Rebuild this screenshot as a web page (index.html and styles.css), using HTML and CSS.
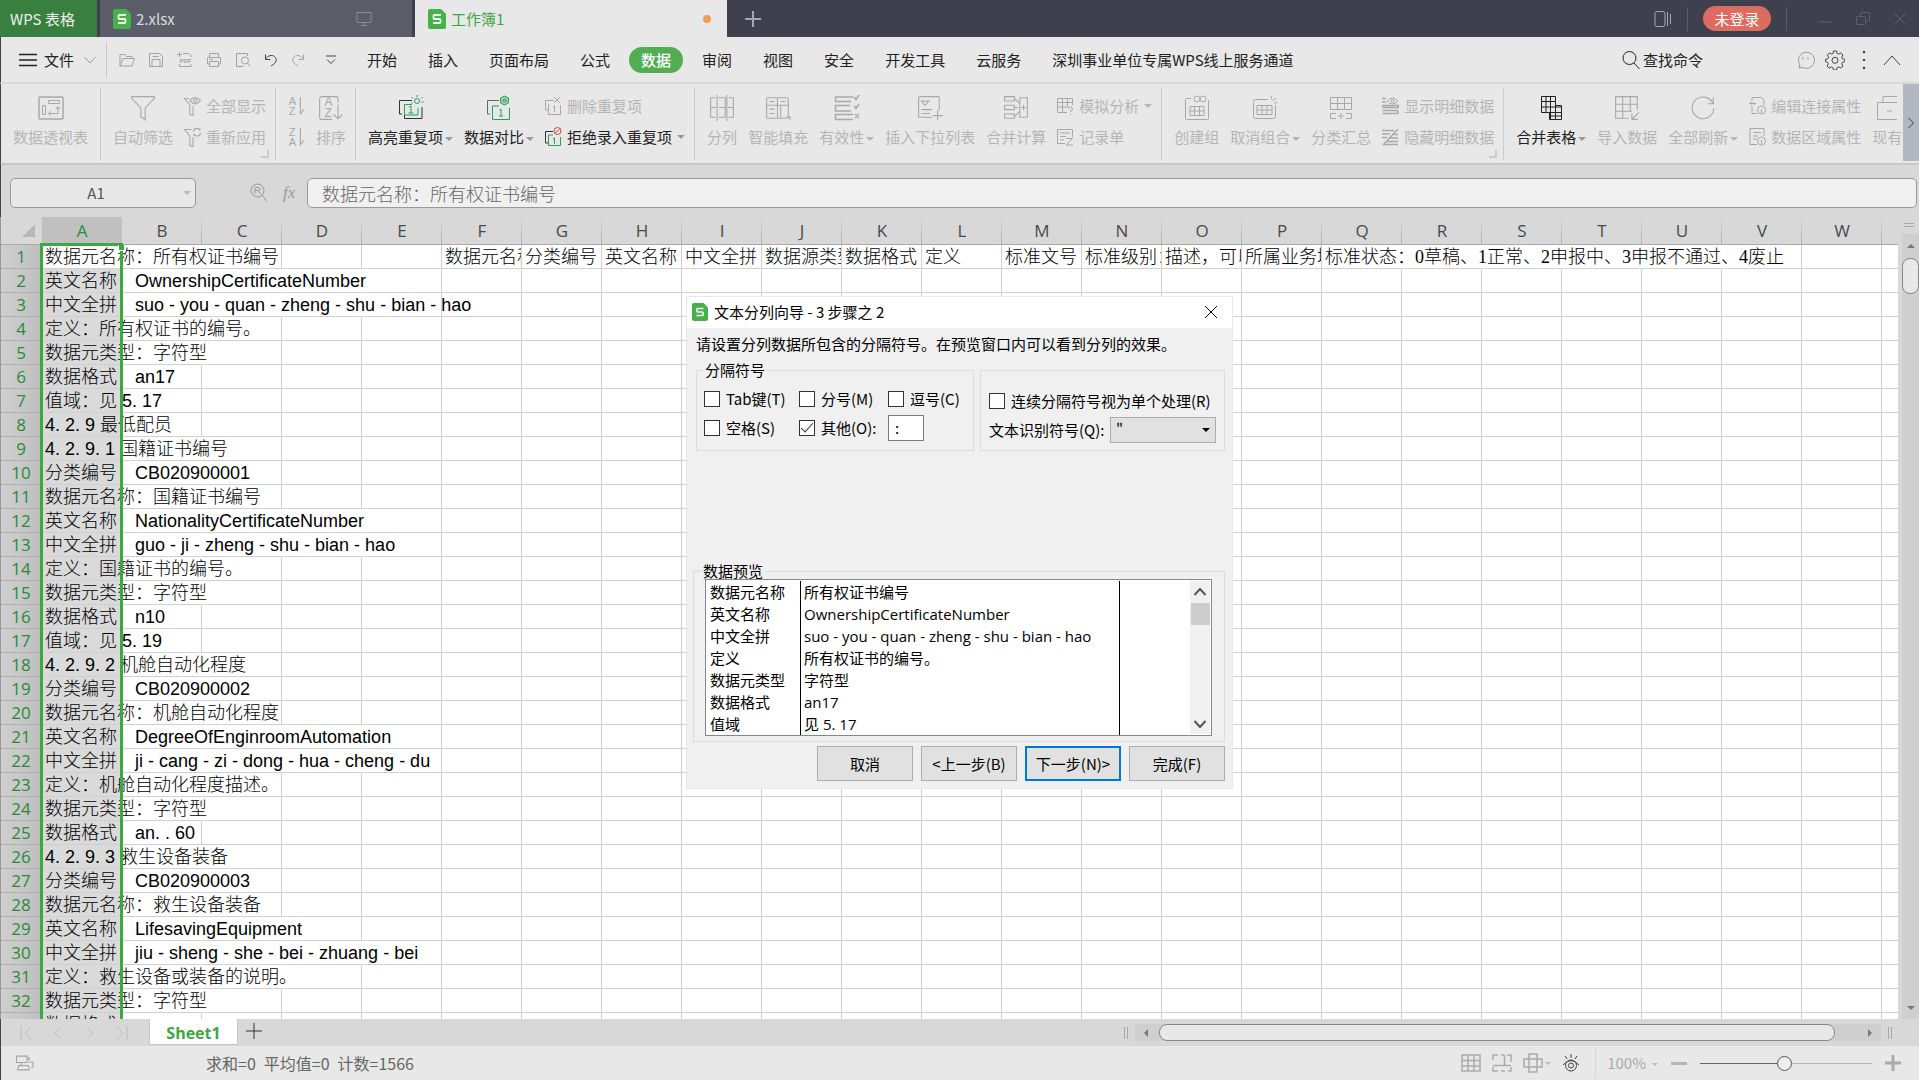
FILE: index.html
```html
<!DOCTYPE html>
<html lang="zh-CN">
<head>
<meta charset="utf-8">
<title>工作簿1 - WPS 表格</title>
<link rel="stylesheet" href="styles.css">
</head>
<body>
<svg class="sprite" aria-hidden="true">
  <symbol id="logo" viewBox="0 0 18 20"><path d="M2 0h11l5 5v13a2 2 0 0 1-2 2H2a2 2 0 0 1-2-2V2a2 2 0 0 1 2-2z" fill="#46b04a" stroke="none"/><path d="M13 6H6.500a1 1 0 0 0-1 1v2a1 1 0 0 0 1 1h5a1 1 0 0 1 1 1v2a1 1 0 0 1-1 1H5" stroke="#f2f2f2" stroke-width="1.800"/></symbol>
  <symbol id="monitor" viewBox="0 0 16 16"><path d="M1 1.500h14v10H1zM8 11.500v3M4.500 14.500h7"/></symbol>
  <symbol id="plus" viewBox="0 0 16 16"><path d="M8 0v16M0 8h16"/></symbol>
  <symbol id="panes" viewBox="0 0 18 18"><rect x="1" y="1.500" width="10" height="15" rx="2"/><path d="M13.500 2v14M16.500 4v10"/></symbol>
  <symbol id="min" viewBox="0 0 16 16"><path d="M2 11h12"/></symbol>
  <symbol id="restore" viewBox="0 0 16 16"><rect x="1.500" y="5.500" width="9" height="8" rx="1"/><path d="M5.500 5V2.500a1 1 0 0 1 1-1h7a1 1 0 0 1 1 1V9a1 1 0 0 1-1 1H11"/></symbol>
  <symbol id="cross" viewBox="0 0 14 14"><path d="M1 1l12 12M13 1L1 13"/></symbol>
  <symbol id="burger" viewBox="0 0 18 14"><path d="M0 1.500h18M0 7h18M0 12.500h18"/></symbol>
  <symbol id="chev" viewBox="0 0 12 8"><path d="M.5 1l5.500 6L11.500 1"/></symbol>
  <symbol id="open" viewBox="0 0 16 14"><path d="M1 13V1.500h5l1.500 2H13v2M1 13l3-7.500h11.500L13 13z"/></symbol>
  <symbol id="save" viewBox="0 0 16 16"><path d="M1.500 1.500h10l3 3v10h-13zM4 14V7.500h8V14M4.500 4.500h6"/></symbol>
  <symbol id="pdf" viewBox="0 0 16 16"><path d="M2.500 5V3M6 1.500h5.500l2.500 2V5M2.500 12v2.500H14V12M0 2.500h5M2.500 0v5"/><text x="8.500" y="11" text-anchor="middle" font-family="Liberation Sans, sans-serif" font-weight="700" font-size="6" fill="currentColor" stroke="none">PDF</text></symbol>
  <symbol id="print" viewBox="0 0 16 16"><path d="M3.500 5V1.500h9V5M3.500 12H1.500V5.500h13V12h-2M3.500 9.500h9v5h-9zM4 7.500h3"/></symbol>
  <symbol id="preview" viewBox="0 0 16 16"><path d="M12.500 4V1.500h-11v13h7"/><circle cx="10" cy="8.500" r="3.500"/><path d="M12.500 11l3 3.500"/></symbol>
  <symbol id="undo" viewBox="0 0 14 14"><path d="M1.500 1.500v5h5M1.500 6C4 2.500 8 1.500 10.500 3.500s3 6-3.500 9.500"/></symbol>
  <symbol id="redo" viewBox="0 0 14 14"><path d="M12.500 1.500v5h-5M12.500 6C10 2.500 6 1.500 3.500 3.500s-3 6 3.500 9.500"/></symbol>
  <symbol id="more" viewBox="0 0 10 10"><path d="M0 1h10M1 4.500l4 4 4-4"/></symbol>
  <symbol id="search" viewBox="0 0 20 20"><circle cx="8.500" cy="8" r="6.500"/><path d="M13 13l5.500 6"/></symbol>
  <symbol id="smile" viewBox="0 0 18 18"><path d="M2 17l1-3a8 8 0 1 1 3 2.500zM6 6v2.500M11 6v2.500"/></symbol>
  <symbol id="gear" viewBox="0 0 20 20"><path d="M8.500 1h3l.6 2.400 1.500.7 2.300-1.200 2 2-1.200 2.300.7 1.500 2.400.6v2.400l-2.400.6-.7 1.500 1.200 2.300-2 2-2.300-1.200-1.500.7-.6 2.400h-3l-.6-2.400-1.500-.7-2.300 1.200-2-2 1.200-2.300-.7-1.500L.5 11.700V9.300l2.400-.6.7-1.500-1.200-2.300 2-2 2.300 1.200 1.500-.7z"/><circle cx="10" cy="10.300" r="3"/></symbol>
  <symbol id="dots" viewBox="0 0 4 18"><path d="M1 2h2M1 9h2M1 16h2" stroke-width="2"/></symbol>
  <symbol id="up" viewBox="0 0 18 12"><path d="M1 11L9 2l8 9"/></symbol>
  <symbol id="pivot" viewBox="0 0 26 24"><rect x="1" y="1" width="24" height="22" rx="1" stroke-width="1.500"/><path d="M10.500 4.500h11v3h-11zM4.500 9.500h3v9h-3zM11 17.500h9v-7M18 13l2-2.500 2 2.500M13 15l-2.500 2.500L13 20"/></symbol>
  <symbol id="filter" viewBox="0 0 24 24"><path d="M1.500 1.500h21v1.500l-8.500 9V23l-4-3v-8L1.500 3z"/></symbol>
  <symbol id="filter-eye" viewBox="0 0 16 18"><path d="M5 2H.5l5 6v9l3 1V9"/><path d="M5.500 4q5-6 10 0q-5 6-10 0z"/><circle cx="10.500" cy="4" r="1.500"/></symbol>
  <symbol id="filter-re" viewBox="0 0 16 18"><path d="M7 2H.5l5 6v9l3 1V9"/><path d="M9 4c0-4 5-4 6-1V1M15.500 5c0 4-5 4-6 1v2"/></symbol>
  <symbol id="az" viewBox="0 0 14 18"><text x="0" y="8" font-family="Liberation Sans, sans-serif" font-size="10" fill="currentColor" stroke="none">A</text><text x="0" y="17" font-family="Liberation Sans, sans-serif" font-size="10" fill="currentColor" stroke="none">Z</text><path d="M10.500 1v15l3-4"/></symbol>
  <symbol id="za" viewBox="0 0 14 18"><text x="0" y="8" font-family="Liberation Sans, sans-serif" font-size="10" fill="currentColor" stroke="none">Z</text><text x="0" y="17" font-family="Liberation Sans, sans-serif" font-size="10" fill="currentColor" stroke="none">A</text><path d="M10.500 1v15l3-4"/></symbol>
  <symbol id="sort" viewBox="0 0 24 24"><path d="M13 22.500H3.500a2 2 0 0 1-2-2v-17a2 2 0 0 1 2-2h13a2 2 0 0 1 2 2V7M18.500 9v13M14.500 18l4 4 4-4"/><text x="6" y="10" font-family="Liberation Sans, sans-serif" font-size="11" fill="currentColor" stroke="none">A</text><text x="6" y="20" font-family="Liberation Sans, sans-serif" font-size="11" fill="currentColor" stroke="none">Z</text></symbol>
  <symbol id="hilite" viewBox="0 0 26 26"><path d="M4 19H1.500V5.500H14M24 12v11.500H6.500V20" stroke="#333"/><g stroke="#2f9e5c"><path d="M14 9.500H6.500V20H20v-7M11 12l2-1v7M10.500 18h5"/><circle cx="19" cy="6" r="2.500"/><path d="M19 0v2M13.500 2l1.500 1.500M24.500 2L23 3.500M25.500 7h-2M13 8h1.500"/></g></symbol>
  <symbol id="compare" viewBox="0 0 26 26"><path d="M4 19H1.500V5.500H13" stroke="#666"/><g stroke="#2f9e5c"><path d="M13 11H6.500v13.500h17V13M13.500 15l1.500-1v7M13 21h4"/><path d="M18.500 1l4 2v5l-4 2-4-2V3z" fill="#a5cdb4"/><circle cx="18.500" cy="5.500" r="1.500"/></g></symbol>
  <symbol id="dup" viewBox="0 0 17 20"><path d="M3 14H.5V4.500H9M4 8H3.500v10.500h12V9M8 11l1.500-1v6M9 1l6 6M15 1L9 7"/></symbol>
  <symbol id="reject" viewBox="0 0 17 20"><path d="M3 16H.5V4.500H8" stroke="#333"/><path d="M8 8H3.500v10.500h12V10M8 12l1.500-1v6" stroke="#2f9e5c"/><g stroke="#d9433d"><circle cx="12.500" cy="4" r="3.500"/><path d="M10 6.500l5-5"/></g></symbol>
  <symbol id="split" viewBox="0 0 24 24"><path d="M6 2.500H1.500v18H6M18 2.500h4.500v18H18M9 2.500h6v18H9M1.500 11.500h5M9 11.500h6M17.500 11.500h5M7.500 0v24M16.500 0v24"/></symbol>
  <symbol id="smart" viewBox="0 0 24 24"><rect x="1.500" y="2.500" width="20" height="19" rx="1"/><path d="M11.500 3v18M1.500 9.500h20M4 6h5M14 6h5M4 13h5M4 17h5M14.500 10v11M20 20h3v3"/></symbol>
  <symbol id="valid" viewBox="0 0 26 26"><path d="M19 2H1.500v4.500H17M16 10.500H1.500V16H17M19 19.500H1.500v5H19M20 2l2 2.500L25 0M20 11l2 2.500L25 9M21 19l4 4M25 19l-4 4" stroke-width="1.500"/></symbol>
  <symbol id="drop" viewBox="0 0 24 24"><path d="M20.500 14V2.500a1 1 0 0 0-1-1h-17a1 1 0 0 0-1 1v18h12M4 5.500h7l-3.500 4zM4 13.500h10M4 17h8M19 14v9.500M14.500 19H24"/></symbol>
  <symbol id="consol" viewBox="0 0 24 24"><path d="M1.500 1.500h9v4h-9zM1.500 9.500h9v4h-9zM1.500 17.500h9v4h-9zM15.500 2.500h7v18h-7zM17 11.500h4M19 9v5M11 3.500l4 4M11 11.500h3M11 19.500l4-4"/></symbol>
  <symbol id="whatif" viewBox="0 0 17 18"><path d="M10 15.500H.5v-14h15V8M.5 5.500h15M.5 10h10M5.500 1.500v14M10.500 1.500V10M11.500 12q0-2 2-2t2 2q0 1-2 2v1M13.500 17v1"/></symbol>
  <symbol id="form" viewBox="0 0 17 18"><path d="M15.500 9V1.500H.5v14H8M3 5h10M3 8.500h6M3 12h4M9 10.500h6.500L9 17h7"/></symbol>
  <symbol id="group" viewBox="0 0 26 26"><path d="M7 3.500H2.500a1 1 0 0 0-1 1v19a1 1 0 0 0 1 1h21a1 1 0 0 0 1-1V5M6 11.500h14v9H6zM6 16h14M10.500 11.500v9M15.500 11.500v9"/><circle cx="13" cy="4" r="3"/><circle cx="19" cy="4" r="3"/></symbol>
  <symbol id="ungroup" viewBox="0 0 26 26"><path d="M16 4.500H3.500a2 2 0 0 0-2 2v15a2 2 0 0 0 2 2h18a2 2 0 0 0 2-2V10M5 10.500h15v9H5zM5 15h15M10 10.500v9M15 10.500v9M19 1l1 4M24 3l-3 3M25.500 7.500L22 8"/></symbol>
  <symbol id="subtotal" viewBox="0 0 26 26"><path d="M2.500 2.500h21v12h-21zM2.500 8.500h21M9.500 2.500v12M16.500 2.500v12M8 18.500H2.500v5H8M18 18.500h5.500v5H18M10 21h6M13 18v6"/></symbol>
  <symbol id="show" viewBox="0 0 17 18"><path d="M0 1.500h4M0 5h4M0 8.500h16.500v2H0M.5 13.500H16M.5 16.500H16V14" stroke-width="1.500"/><path d="M5 4q5.500-6 11 0q-5.500 6-11 0z"/><circle cx="10.500" cy="4" r="1.500"/></symbol>
  <symbol id="hide" viewBox="0 0 17 18"><path d="M0 2.500h12M0 6h8M0 9.500h5M16 6.500h-5M16 10H8M16 13.500H4M16 16.500H2M16 1L1 17" stroke-width="1.300"/></symbol>
  <symbol id="merge" viewBox="0 0 24 26"><path d="M2.500 1.500h14v9h6v14h-12v-7h-8zM2.500 6.500h14M2.500 12h20M7 1.500v16M11.500 1.500v23M16.500 10v14.500M2.500 17.500h20M10 21h12.500"/></symbol>
  <symbol id="import" viewBox="0 0 24 24"><path d="M21.500 14V1.500h-20v20h12M1.500 8.500h20M1.500 15h15M8 1.500v20M15 1.500v13M23 16l-6.500 6.500M16.500 17v5.500H22"/></symbol>
  <symbol id="refresh" viewBox="0 0 24 24"><path d="M21 7.500A10 10 0 1 0 22 12M21.500 2v6H16"/></symbol>
  <symbol id="conn" viewBox="0 0 17 20"><path d="M3 5V1.500h9.500L15 4v5M3 10v7.500h5M0 7.500h7M5 6v3M2 6v3"/><circle cx="12.500" cy="14" r="4"/><path d="M12.500 13v4"/></symbol>
  <symbol id="area" viewBox="0 0 17 20"><path d="M15 9V1.500H1v16h7M4 5.500h8M4 9h5M4 12h4"/><circle cx="12.500" cy="14" r="4"/><path d="M12.500 13v4"/></symbol>
  <symbol id="exist" viewBox="0 0 24 26"><path d="M8 8V1.500h14M22 7.500H2.500v17H22M12 16h5"/></symbol>
  <symbol id="zoomr" viewBox="0 0 18 20"><circle cx="7.500" cy="7.500" r="6.500"/><path d="M5 11V4.500h3.500a1.500 1.500 0 0 1 0 3H5M8 7.500l2.500 3.500M12 12l5 6.500"/></symbol>
  <symbol id="first" viewBox="0 0 12 14"><path d="M1 0v14M11 1L5 7l6 6"/></symbol>
  <symbol id="prev" viewBox="0 0 12 14"><path d="M9 1L3 7l6 6"/></symbol>
  <symbol id="next" viewBox="0 0 12 14"><path d="M3 1l6 6-6 6"/></symbol>
  <symbol id="last" viewBox="0 0 12 14"><path d="M11 0v14M1 1l6 6-6 6"/></symbol>
  <symbol id="backup" viewBox="0 0 17 16"><path d="M.5 1.500h10v6H.5zM10.500 3h2v2h-2M5 7.500v3M12 7h4v5h-2M2.500 10.500h9l1 4h-11z"/></symbol>
  <symbol id="gridv" viewBox="0 0 20 18"><path d="M1 1h18v16H1zM1 6.500h18M1 12h18M7 1v16M13 1v16" stroke-width="1.500"/></symbol>
  <symbol id="pagev" viewBox="0 0 20 18"><path d="M1 6V1h5M9 1h3M12.500 1v10.500M1 11.500h18M15 1h4v7M1 13v4h5M9 17h4M16 17h3v-4" stroke-width="1.500"/></symbol>
  <symbol id="readv" viewBox="0 0 20 20"><path d="M6 1h8v18H6zM1 6h18v8H1zM6 6v8M14 6v8" stroke-width="1.500"/></symbol>
  <symbol id="eye" viewBox="0 0 18 18"><circle cx="9" cy="11.500" r="5.500"/><circle cx="9" cy="11.500" r="2.500"/><path d="M1 11q8-9 16 0M9 0v4M3 2l2 3M15 2l-2 3"/></symbol>
</svg>

<header class="titlebar">
  <button class="brand">WPS 表格</button>
  <a class="doc" href="#"><svg class="i18"><use href="#logo"/></svg><span>2.xlsx</span><svg class="i16 doc-end"><use href="#monitor"/></svg></a>
  <a class="doc doc-on" href="#"><svg class="i18"><use href="#logo"/></svg><span>工作簿1</span><i class="unsaved doc-end"></i></a>
  <button class="newdoc" aria-label="新建"><svg class="i16 bold"><use href="#plus"/></svg></button>
  <div class="winctl">
    <svg class="i18"><use href="#panes"/></svg>
    <i class="bar"></i>
    <button class="login">未登录</button>
    <i class="bar"></i>
    <div class="winbtns">
      <button aria-label="最小化"><svg class="i16"><use href="#min"/></svg></button>
      <button aria-label="还原"><svg class="i16"><use href="#restore"/></svg></button>
      <button aria-label="关闭"><svg class="i14"><use href="#cross"/></svg></button>
    </div>
  </div>
</header>

<nav class="menubar">
  <button class="file"><svg class="i18 bold"><use href="#burger"/></svg>文件<svg class="i12 dim"><use href="#chev"/></svg></button>
  <div class="quick">
    <svg class="i16"><use href="#open"/></svg><svg class="i16"><use href="#save"/></svg><svg class="i16"><use href="#pdf"/></svg><svg class="i16"><use href="#print"/></svg><svg class="i16"><use href="#preview"/></svg><svg class="i14 dark"><use href="#undo"/></svg><svg class="i14"><use href="#redo"/></svg><svg class="i10 dark"><use href="#more"/></svg>
  </div>
  <div class="tabs">
    <a href="#">开始</a><a href="#">插入</a><a href="#">页面布局</a><a href="#">公式</a><a href="#" class="on">数据</a><a href="#">审阅</a><a href="#">视图</a><a href="#">安全</a><a href="#">开发工具</a><a href="#">云服务</a><a href="#">深圳事业单位专属WPS线上服务通道</a>
  </div>
  <button class="find"><svg class="i20"><use href="#search"/></svg>查找命令</button>
  <div class="tools"><svg class="i18 dim"><use href="#smile"/></svg><svg class="i20"><use href="#gear"/></svg><svg class="i18"><use href="#dots"/></svg><svg class="i18"><use href="#up"/></svg></div>
</nav>

<div class="ribbon">
  <div class="groups">
    <div class="group"><button class="big" disabled><svg><use href="#pivot"/></svg><span>数据透视表</span></button></div>
    <div class="group corner"><button class="big" disabled><svg><use href="#filter"/></svg><span>自动筛选</span></button>
      <div class="pair"><button disabled><svg><use href="#filter-eye"/></svg>全部显示</button><button disabled><svg><use href="#filter-re"/></svg>重新应用</button></div></div>
    <div class="group"><div class="pair"><button disabled aria-label="升序"><svg><use href="#az"/></svg></button><button disabled aria-label="降序"><svg><use href="#za"/></svg></button></div>
      <button class="big" disabled><svg><use href="#sort"/></svg><span>排序</span></button></div>
    <div class="group"><button class="big"><svg><use href="#hilite"/></svg><span>高亮重复项<i class="dd"></i></span></button><button class="big"><svg><use href="#compare"/></svg><span>数据对比<i class="dd"></i></span></button>
      <div class="pair"><button disabled><svg><use href="#dup"/></svg>删除重复项</button><button><svg><use href="#reject"/></svg>拒绝录入重复项<i class="dd"></i></button></div></div>
    <div class="group"><button class="big" disabled><svg><use href="#split"/></svg><span>分列</span></button><button class="big" disabled><svg><use href="#smart"/></svg><span>智能填充</span></button><button class="big" disabled><svg><use href="#valid"/></svg><span>有效性<i class="dd"></i></span></button><button class="big" disabled><svg><use href="#drop"/></svg><span>插入下拉列表</span></button><button class="big" disabled><svg><use href="#consol"/></svg><span>合并计算</span></button>
      <div class="pair"><button disabled><svg><use href="#whatif"/></svg>模拟分析<i class="dd"></i></button><button disabled><svg><use href="#form"/></svg>记录单</button></div></div>
    <div class="group corner"><button class="big" disabled><svg><use href="#group"/></svg><span>创建组</span></button><button class="big" disabled><svg><use href="#ungroup"/></svg><span>取消组合<i class="dd"></i></span></button><button class="big" disabled><svg><use href="#subtotal"/></svg><span>分类汇总</span></button>
      <div class="pair"><button disabled><svg><use href="#show"/></svg>显示明细数据</button><button disabled><svg><use href="#hide"/></svg>隐藏明细数据</button></div></div>
    <div class="group"><button class="big"><svg><use href="#merge"/></svg><span>合并表格<i class="dd"></i></span></button><button class="big" disabled><svg><use href="#import"/></svg><span>导入数据</span></button><button class="big" disabled><svg><use href="#refresh"/></svg><span>全部刷新<i class="dd"></i></span></button>
      <div class="pair"><button disabled><svg><use href="#conn"/></svg>编辑连接属性</button><button disabled><svg><use href="#area"/></svg>数据区域属性</button></div>
      <button class="big start" disabled><svg><use href="#exist"/></svg><span>现有</span></button></div>
  </div>
  <button class="scroll-r" aria-label="向右滚动"><svg class="i10"><use href="#next"/></svg></button>
</div>

<div class="formula">
  <label class="namebox"><input value="A1" aria-label="名称框"><i class="dd"></i></label>
  <div class="fx"><svg class="i20"><use href="#zoomr"/></svg><em>fx</em></div>
  <input class="fxinput" value="数据元名称：所有权证书编号" aria-label="编辑栏">
</div>

<main class="sheet">
  <div class="gridwrap">
    <table class="grid"><thead><tr id="cols"></tr></thead><tbody id="rows"></tbody></table>
    <div class="selection"></div>
    <i class="handle"></i>
  </div>
  <div class="vscroll"><i class="grip"></i><div class="trough"><i class="tri t-up"></i><i class="thumb"></i><i class="tri t-down"></i></div></div>
</main>

<div class="sheetbar">
  <div class="nav"><svg><use href="#first"/></svg><svg><use href="#prev"/></svg><svg><use href="#next"/></svg><svg><use href="#last"/></svg></div>
  <a class="sheettab" href="#">Sheet1</a>
  <button class="addsheet" aria-label="新建工作表"><svg class="i16"><use href="#plus"/></svg></button>
  <div class="hscroll"><i class="vgrip"></i><div class="htrough"><i class="tri t-left"></i><i class="hthumb"></i><i class="tri t-right"></i></div><i class="vgrip"></i></div>
</div>

<footer class="status">
  <svg class="i18"><use href="#backup"/></svg>
  <p class="sums"><span>求和=0</span><span>平均值=0</span><span>计数=1566</span></p>
  <div class="views"><svg class="i20"><use href="#gridv"/></svg><svg class="i20"><use href="#pagev"/></svg><span><svg class="i20"><use href="#readv"/></svg><i class="dd"></i></span><svg class="i18 dark"><use href="#eye"/></svg></div>
  <div class="zoom"><span>100%<i class="dd"></i></span><button aria-label="缩小"><i class="minus"></i></button><input type="range" min="0" max="100" value="49" aria-label="缩放"><button aria-label="放大"><svg class="i16 heavy"><use href="#plus"/></svg></button></div>
</footer>

<section class="dialog" role="dialog" aria-labelledby="dlg-title">
  <div class="dlg-head"><svg class="i18"><use href="#logo"/></svg><h1 id="dlg-title">文本分列向导 - 3 步骤之 2</h1><button aria-label="关闭"><svg class="i14"><use href="#cross"/></svg></button></div>
  <form class="dlg-body">
    <p>请设置分列数据所包含的分隔符号。在预览窗口内可以看到分列的效果。</p>
    <div class="options">
      <fieldset class="delims"><legend>分隔符号</legend>
        <div class="checks">
          <label><input type="checkbox">Tab键(T)</label><label><input type="checkbox">分号(M)</label><label><input type="checkbox">逗号(C)</label>
          <label><input type="checkbox">空格(S)</label><label><input type="checkbox" checked>其他(O):</label><input class="other" value=":" aria-label="其他分隔符">
        </div>
      </fieldset>
      <fieldset class="treat">
        <label><input type="checkbox">连续分隔符号视为单个处理(R)</label>
        <div class="qual"><label for="qualifier">文本识别符号(Q):</label><span class="pick"><select id="qualifier"><option>"</option></select><i class="caret"></i></span></div>
      </fieldset>
    </div>
    <fieldset class="result"><legend>数据预览</legend>
      <div class="list">
        <table><tbody>
          <tr><td>数据元名称</td><td>所有权证书编号</td><td></td></tr>
          <tr><td>英文名称</td><td>OwnershipCertificateNumber</td><td></td></tr>
          <tr><td>中文全拼</td><td>suo - you - quan - zheng - shu - bian - hao</td><td></td></tr>
          <tr><td>定义</td><td>所有权证书的编号。</td><td></td></tr>
          <tr><td>数据元类型</td><td>字符型</td><td></td></tr>
          <tr><td>数据格式</td><td>an17</td><td></td></tr>
          <tr><td>值域</td><td>见 5. 17</td><td></td></tr>
        </tbody></table>
        <div class="lscroll"><svg class="i12"><use href="#chev"/></svg><i></i><svg class="i12"><use href="#chev"/></svg></div>
      </div>
    </fieldset>
    <div class="actions"><button type="button">取消</button><button type="button">&lt;上一步(B)</button><button type="button" class="primary">下一步(N)&gt;</button><button type="button">完成(F)</button></div>
  </form>
</section>
<script src="grid.js"></script>
</body>
</html>
```
FILE: styles.css
```css
:root {
  --ui: "Open Sans", "Noto Sans CJK SC", sans-serif;
  --cjk: "Noto Sans CJK SC", sans-serif;
  --green: #3da742;
}
* { box-sizing: border-box; }
body {
  margin: 0; height: 100vh; display: flex; flex-direction: column; overflow: hidden;
  font: 15px/20px var(--cjk); color: #222; background: #d8d8d8;
}
button, input, select { font: inherit; color: inherit; margin: 0; padding: 0; border: 0; background: none; }
a { color: inherit; text-decoration: none; }
p, h1 { margin: 0; font-size: 15px; font-weight: 400; }
svg { fill: none; stroke: currentColor; stroke-width: 1; flex: none; display: block; }
.sprite { display: none; }
.i10 { width: 10px; height: 12px; }
.i12 { width: 12px; height: 12px; }
.i14 { width: 14px; height: 14px; }
.i16 { width: 16px; height: 16px; }
.i18 { width: 18px; height: 20px; }
.i20 { width: 20px; height: 20px; }
.bold { stroke-width: 2; }
.heavy { stroke-width: 3; }
.dim { color: #999; }
.dark { color: #444; }
.dd { display: inline-block; border: 4px solid transparent; border-top-color: #999; border-bottom: 0; margin-left: 2px; vertical-align: middle; }

.titlebar { display: flex; height: 37px; background: #3e414d; flex: none; }
.brand { width: 97px; background: #398040; color: #eee; padding-right: 12px; }
.doc { display: flex; align-items: center; gap: 5px; width: 312px; margin-left: 3px; padding: 0 13px; background: #5b5d69; color: #ddd; }
.doc-on { background: #e8e8e8; color: var(--green); }
.doc-end { margin-left: auto; margin-right: 27px; color: #878994; }
.unsaved { width: 8px; height: 8px; border-radius: 50%; background: #e8a05a; margin-right: 3px; }
.newdoc { padding: 0 18px; color: #a5a7af; }
.winctl { display: flex; align-items: center; gap: 15px; margin-left: auto; padding-right: 12px; color: #a5a7af; }
.bar { width: 1px; height: 24px; background: #5b5d69; }
.login { width: 68px; height: 25px; border-radius: 13px; background: #dc6c5f; color: #fff; }
.winbtns { display: flex; gap: 22px; padding-left: 15px; color: #5f626e; }

.menubar { display: flex; align-items: center; height: 47px; flex: none; background: #e8e8e8; border-bottom: 2px solid #d8d8d8; border-left: 1px solid #444; }
.file { display: flex; align-items: center; gap: 7px; width: 106px; padding-left: 18px; height: 36px; border-right: 1px solid #c8c8c8; }
.file .bold { height: 14px; stroke-width: 1.500; }
.file .dim { margin-left: 3px; }
.quick { display: flex; align-items: center; gap: 13px; width: 248px; padding-left: 12px; color: #a3a3a3; }
.quick .i10 { margin-left: 8px; }
.tabs { display: flex; gap: 7px; }
.tabs a { padding: 3px 12px; border-radius: 13px; white-space: nowrap; }
.tabs .on { background: #52ad53; color: #fff; font-weight: 500; }
.find { display: flex; align-items: center; gap: 2px; margin-left: auto; margin-right: 94px; stroke-width: 1.500; }
.tools { display: flex; gap: 10px; padding-right: 18px; color: #444; }
.tools .dim { color: #999; }

.ribbon { display: flex; height: 80px; flex: none; background: #e8e8e8; border-bottom: 1px solid #c4c4c4; border-left: 1px solid #444; box-shadow: 0 1px 1px #ccc; }
.groups { display: flex; flex: 1; min-width: 0; overflow: hidden; padding: 4px 0 2px; }
.group { position: relative; display: flex; gap: 11px; padding: 0 9px 0 12px; border-right: 1px solid #cbcbcb; flex: none; }
.group:first-child { padding-right: 12px; }
.group:last-child { border-right: 0; padding-right: 0; }
.corner::after { content: ""; position: absolute; right: 6px; bottom: 3px; width: 6px; height: 6px; border: solid #ccc; border-width: 0 2px 2px 0; }
.group button { color: #222; white-space: nowrap; }
.group button:disabled { color: #b5b5b5; }
.group button:disabled svg { color: #a8a8a8; }
.group button:disabled .dd { border-top-color: #b5b5b5; }
.big { display: flex; flex-direction: column; align-items: center; gap: 6px; padding-top: 7px; }
.big svg { width: 26px; height: 26px; }
.pair { display: flex; flex-direction: column; gap: 11px; padding-top: 8px; }
.pair button { display: flex; align-items: center; gap: 5px; height: 20px; }
.pair svg { width: 17px; height: 20px; }
.pair .dd { margin-left: 0; }
.scroll-r { width: 16px; background: #b3b7c2; margin-bottom: 2px; display: grid; place-items: center; flex: none; }

.formula { display: flex; height: 53px; flex: none; padding: 14px 2px 9px 9px; border-left: 1px solid #444; }
.namebox { display: flex; align-items: center; width: 186px; border: 1px solid #999; border-radius: 5px; background: #e8e8e8; padding-right: 4px; }
.namebox input { flex: 1; min-width: 0; text-align: center; color: #555; }
.namebox .dd { border-top-color: #bbb; }
.fx { display: flex; align-items: center; gap: 14px; padding-left: 53px; width: 111px; color: #999; }
.fx em { font: italic 17px/20px "Liberation Serif", serif; }
.fxinput { flex: 1; border: 1px solid #999; border-radius: 5px; background: #f0f0f0; padding-left: 14px; font-size: 18px; font-weight: 300; color: #666; }

.sheet { display: flex; flex: 1; min-height: 0; border-left: 1px solid #999; }
.gridwrap { position: relative; flex: 1; min-width: 0; overflow: hidden; background: #fff; }
.grid { table-layout: fixed; border-collapse: separate; border-spacing: 0; width: 1961px; }
.grid th { font: 17px/22px var(--ui); color: #4a4a4a; padding: 0; }
.grid thead th { width: 80px; height: 28px; border-bottom: 1px solid #aaa; background: linear-gradient(#d8d8d8, #aaa) right / 1px 100% no-repeat #d8d8d8; }
.grid thead th:first-child { width: 41px; background: #d8d8d8; }
.grid thead th.picked { background: #c0c0c0; color: #2b8a37; }
.corner-tri { display: block; width: 13px; height: 13px; margin-left: 21px; background: #b8b8b8; clip-path: polygon(100% 0, 100% 100%, 0 100%); }
.grid tbody th { background: linear-gradient(90deg, #d0d0d0, #bebebe); border-bottom: 1px solid #b0b0b0; color: #2b8a37; height: 24px; padding: 1px 1px 0 0; }
.grid td { height: 24px; padding: 1px 0 0 3px; border-right: 1px solid #d0d0d0; border-bottom: 1px solid #d0d0d0; font: 300 18px/22px "Liberation Sans", "Noto Sans CJK SC", sans-serif; color: #000; white-space: nowrap; overflow: visible; }
.grid td span { display: block; width: 0; height: 22px; }
.grid td.clip { overflow: hidden; }
.grid td.serif { font-family: "Liberation Serif", "Noto Sans CJK SC", serif; }
.grid td.spill { border-right-color: transparent; }
.grid td.sel { background: #dadada; }
.selection { position: absolute; left: 39px; top: 26px; width: 83px; bottom: -4px; border: 3px solid var(--green); }
.handle { position: absolute; left: 117px; top: 28px; width: 6px; height: 6px; background: var(--green); border-left: 1px solid #fff; border-bottom: 1px solid #fff; }
.vscroll { display: flex; flex-direction: column; width: 21px; padding: 6px 0 0 4px; }
.grip { width: 10px; height: 4px; margin: 0 0 7px 2px; border: solid #aaa; border-width: 1px 0; }
.trough { flex: 1; display: flex; flex-direction: column; align-items: center; background: #cfcfcf; padding: 9px 0; }
.thumb { width: 17px; height: 36px; margin-top: 10px; border: 1px solid #888; border-radius: 8px; background: #e8e8e8; }
.tri { border: 4px solid transparent; flex: none; }
.t-up { border-bottom-color: #777; border-top: 0; height: 5px; }
.t-down { border-top-color: #777; border-bottom: 0; margin-top: auto; }
.t-left { border-right-color: #777; border-left: 0; }
.t-right { border-left-color: #777; border-right: 0; }

.sheetbar { display: flex; height: 27px; flex: none; border-left: 1px solid #444; }
.nav { display: flex; align-items: center; gap: 20px; width: 148px; padding-left: 19px; color: #bdbdbd; }
.nav svg { width: 12px; height: 14px; }
.sheettab { width: 89px; background: #fff; border: solid #c8c8c8; border-width: 0 1px 1px; color: var(--green); font: 700 16px/28px var(--ui); text-align: center; height: 26px; }
.addsheet { padding: 0 8px; color: #333; height: 24px; }
.hscroll { display: flex; align-items: center; margin-left: auto; flex: 0 1 795px; gap: 7px; padding-right: 27px; }
.vgrip { width: 4px; height: 12px; border: solid #aaa; border-width: 0 1px; }
.htrough { flex: 1; height: 17px; display: flex; align-items: center; background: #cfcfcf; padding: 0 9px; }
.hthumb { flex: 1; height: 17px; margin: 0 33px 0 11px; border: 1px solid #888; border-radius: 8px; background: #e8e8e8; }

.status { display: flex; align-items: center; height: 34px; flex: none; background: #e8e8e8; border-left: 1px solid #444; padding: 0 18px 0 15px; color: #666; }
.status > svg { color: #a5a5a5; }
.sums { display: flex; gap: 8px; padding-left: 172px; font: 16px/20px var(--cjk); }
.views { display: flex; align-items: center; gap: 11px; margin-left: auto; padding-right: 15px; border-right: 1px solid #d5d5d5; height: 30px; color: #aaa; }
.views span { display: flex; align-items: center; }
.views .dd, .zoom .dd { border-top-color: #bbb; border-width: 3px; border-bottom: 0; }
.zoom { display: flex; align-items: center; gap: 13px; padding-left: 11px; color: #aaa; }
.zoom .dd { margin-left: 6px; }
.minus { display: block; width: 16px; height: 3px; background: #b5b5b5; }
.zoom input { appearance: none; width: 172px; height: 16px; background: linear-gradient(90deg, #666 49%, #b5b5b5 49%) center / 100% 1px no-repeat; }
.zoom input::-webkit-slider-thumb { appearance: none; width: 15px; height: 15px; border-radius: 50%; border: 1px solid #555; background: #eee; }

.dialog { position: absolute; left: 686px; top: 296px; width: 547px; min-height: 493px; display: flex; flex-direction: column; background: #f0f0f0; border: 1px solid #e8e8e8; color: #000; }
.dlg-head { display: flex; align-items: center; gap: 6px; height: 31px; padding: 0 14px 1px 5px; background: #fff; }
.dlg-head .i18 { width: 16px; height: 18px; }
.dlg-head button { margin-left: auto; }
.dlg-body { flex: 1; display: flex; flex-direction: column; padding: 6px 7px 7px 6px; }
.dlg-body p { padding-left: 3px; }
.options { display: flex; align-items: flex-end; gap: 6px; margin: 8px 0 0 3px; }
fieldset { border: 1px solid #dcdcdc; margin: 0; padding: 0; min-width: 0; }
legend { line-height: 16px; padding: 0 2px; margin-left: 6px; }
.delims { width: 278px; }
.checks { display: grid; grid-template-columns: 95px 89px auto; align-items: center; padding: 8px 0 7px 7px; row-gap: 1px; height: 72px; }
.dlg-body label { display: flex; align-items: center; gap: 6px; white-space: nowrap; }
.dlg-body input[type=checkbox] { appearance: none; width: 16px; height: 16px; border: 1px solid #333; background: #fff; flex: none; display: grid; place-items: center; }
.dlg-body input:checked::after { content: ""; width: 11px; height: 5px; border: solid #333; border-width: 0 0 1px 1px; transform: rotate(-48deg); margin-bottom: 3px; }
.other { width: 36px; height: 26px; border: 1px solid #7a7a7a; background: #fff; padding-left: 6px; }
.treat { flex: 1; height: 81px; padding: 20px 8px 0; }
.qual { display: flex; align-items: center; justify-content: space-between; margin-top: 6px; }
.pick { position: relative; width: 106px; }
.pick select { appearance: none; width: 100%; height: 26px; padding-left: 5px; border: 1px solid #adadad; background: #e1e1e1; }
.caret { position: absolute; right: 6px; top: 11px; border: 4px solid transparent; border-top-color: #000; border-bottom: 0; }
.result { margin-top: auto; padding: 0 12px 5px 11px; }
.result legend { margin-left: -4px; }
.list { display: flex; height: 157px; border: 1px solid #828790; background: #fff; padding: 1px; overflow: hidden; }
.list table { flex: 1; border-spacing: 0; table-layout: fixed; line-height: 22px; height: 154px; font-family: var(--ui); }
.list td { padding: 0 0 0 3px; white-space: nowrap; border-right: 1px solid #000; }
.list td:nth-child(1) { width: 94px; }
.list td:nth-child(2) { width: 319px; }
.list td:last-child { border: 0; }
.lscroll { width: 20px; background: #f0f0f0; display: flex; flex-direction: column; align-items: center; padding: 5px 0 4px; color: #555; }
.lscroll svg { stroke-width: 2; }
.lscroll svg:first-child { transform: rotate(180deg); }
.lscroll svg:last-child { margin-top: auto; }
.lscroll i { width: 19px; height: 22px; margin-top: 5px; background: #cdcdcd; }
.actions { display: flex; justify-content: flex-end; gap: 8px; margin-top: 4px; }
.actions button { width: 96px; height: 35px; background: #e1e1e1; border: 1px solid #adadad; }
.actions .primary { border: 2px solid #0078d7; }
```
FILE: grid.js
```js
// Column A texts with the number of columns each one spills across
const columnA = [
  ["数据元名称：所有权证书编号", 3],
  ["英文名称：OwnershipCertificateNumber", 5],
  ["中文全拼：suo - you - quan - zheng - shu - bian - hao", 5],
  ["定义：所有权证书的编号。", 3],
  ["数据元类型：字符型", 3],
  ["数据格式：an17", 2],
  ["值域：见 5. 17", 2],
  ["4. 2. 9 最低配员", 2],
  ["4. 2. 9. 1 国籍证书编号", 3],
  ["分类编号：CB020900001", 3],
  ["数据元名称：国籍证书编号", 3],
  ["英文名称：NationalityCertificateNumber", 5],
  ["中文全拼：guo - ji - zheng - shu - bian - hao", 5],
  ["定义：国籍证书的编号。", 3],
  ["数据元类型：字符型", 3],
  ["数据格式：n10", 2],
  ["值域：见 5. 19", 2],
  ["4. 2. 9. 2 机舱自动化程度", 3],
  ["分类编号：CB020900002", 3],
  ["数据元名称：机舱自动化程度", 3],
  ["英文名称：DegreeOfEnginroomAutomation", 5],
  ["中文全拼：ji - cang - zi - dong - hua - cheng - du", 5],
  ["定义：机舱自动化程度描述。", 3],
  ["数据元类型：字符型", 3],
  ["数据格式：an. . 60", 2],
  ["4. 2. 9. 3 救生设备装备", 3],
  ["分类编号：CB020900003", 3],
  ["数据元名称：救生设备装备", 3],
  ["英文名称：LifesavingEquipment", 4],
  ["中文全拼：jiu - sheng - she - bei - zhuang - bei", 5],
  ["定义：救生设备或装备的说明。", 4],
  ["数据元类型：字符型", 3],
  ["数据格式：", 2]
];
const firstRow = {
  5: "数据元名称", 6: "分类编号", 7: "英文名称", 8: "中文全拼", 9: "数据源类型",
  10: "数据格式", 11: "定义", 12: "标准文号", 13: "标准级别：", 14: "描述，可以",
  15: "所属业务域", 16: "标准状态：0草稿、1正常、2申报中、3申报不通过、4废止"
};
const columnCount = 24;
const rowCount = 60;

const cols = document.getElementById("cols");
const corner = document.createElement("th");
corner.innerHTML = '<i class="corner-tri"></i>';
cols.append(corner);
for (let c = 0; c < columnCount; c++) {
  const th = document.createElement("th");
  th.textContent = c < 23 ? String.fromCharCode(65 + c) : "";
  if (c === 0) th.className = "picked";
  cols.append(th);
}

const body = document.getElementById("rows");
for (let r = 0; r < rowCount; r++) {
  const tr = document.createElement("tr");
  const head = document.createElement("th");
  head.textContent = r + 1;
  tr.append(head);
  const [text, span] = columnA[r] || ["", 1];
  for (let c = 0; c < columnCount; c++) {
    const td = document.createElement("td");
    const value = c === 0 ? text : r === 0 ? firstRow[c] : "";
    if (value) {
      const s = document.createElement("span");
      s.textContent = value;
      td.append(s);
    }
    if (c === 0 && r > 0) td.classList.add("sel");
    if (c < span - 1) td.classList.add("spill");
    if (r === 0 && c >= 5) td.classList.add("serif");
    if (r === 0 && c >= 5 && c < 16) td.classList.add("clip");
    if (r === 0 && c >= 16 && c < 21) td.classList.add("spill");
    tr.append(td);
  }
  body.append(tr);
}
```
